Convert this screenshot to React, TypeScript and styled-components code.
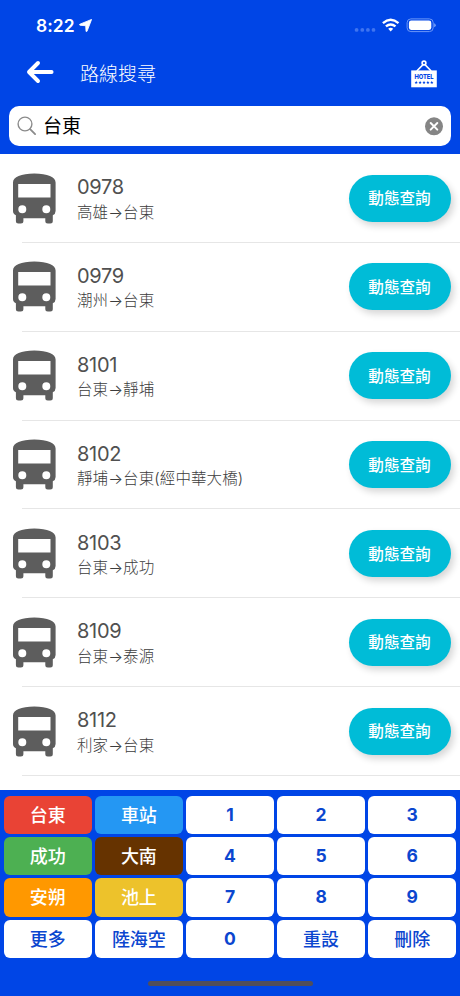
import React from "react";
import styled, { createGlobalStyle } from "styled-components";

const GlobalStyle = createGlobalStyle`
  * { box-sizing: border-box; }
  body { margin: 0; background: #0045e6; }
  button { border: 0; padding: 0; background: none; font: inherit; color: inherit; }
`;

const Screen = styled.div`
  width: 460px;
  height: 996px;
  display: flex;
  flex-direction: column;
  overflow: hidden;
  background: #fff;
  font-family: Inter, "Noto Sans CJK TC", sans-serif;
`;

const Header = styled.header`
  flex: none;
  height: 154px;
  background: #0045e6;
  color: #fff;
`;

const StatusBar = styled.div`
  height: 50px;
  padding: 0 24px 0 36px;
  display: flex;
  align-items: center;
  justify-content: space-between;
`;

const Clock = styled.div`
  display: flex;
  align-items: center;
  gap: 4.5px;
  padding-top: 1px;
  font-size: 17.4px;
  line-height: 20px;
  font-weight: 600;
  letter-spacing: 0.05px;
`;

const StatusIcons = styled.div`
  display: flex;
  align-items: center;
`;

const NavBar = styled.div`
  height: 56px;
  padding: 0 23px 8px 26px;
  display: flex;
  align-items: center;
`;

const Title = styled.h1`
  margin: 0 auto 0 26px;
  padding-top: 2px;
  font-size: 19px;
  line-height: 28px;
  font-weight: 300;
`;

const IconButton = styled.button`
  display: flex;
`;

const BackButton = styled(IconButton)`
  padding-bottom: 4px;
`;

const SearchBox = styled.div`
  margin: 0 9px;
  height: 40px;
  border-radius: 10px;
  padding: 0 7px 0 8px;
  display: flex;
  align-items: center;
  background: #fff;
`;

const SearchText = styled.span`
  flex: 1;
  margin-left: 6px;
  padding-top: 1px;
  color: #000;
  font-size: 19px;
  line-height: 28px;
`;

const RouteList = styled.main`
  flex: 1;
  min-height: 0;
  overflow: hidden;
`;

const RouteRow = styled.div`
  height: 88.85px;
  padding: 0 9px 0.6px 13px;
  display: flex;
  align-items: center;
  background: linear-gradient(#e6e6e6, #e6e6e6) 22px 100% / 438px 1px no-repeat;
`;

const RouteInfo = styled.div`
  flex: 1;
  margin-left: 21px;
  padding-top: 3.5px;
  color: #505050;
`;

const RouteNumber = styled.div`
  font-size: 20px;
  line-height: 25.5px;
  letter-spacing: -0.3px;
`;

const RouteName = styled.div`
  font-weight: 300;
  color: #3c3c3c;
  font-size: 15.5px;
  line-height: 24px;
  letter-spacing: 0.1px;
`;

const QueryButton = styled.button`
  width: 102px;
  height: 47px;
  padding-right: 1px;
  padding-top: 2px;
  border-radius: 24px;
  background: #00bcd7;
  color: #fff;
  font-size: 15.6px;
  font-weight: 500;
  line-height: 24px;
  box-shadow: 3px 4px 7px rgba(0, 0, 0, 0.16);
`;

const Keypad = styled.footer`
  flex: none;
  height: 206px;
  padding: 5.5px 3.8px 0;
  display: flex;
  flex-direction: column;
  background: #0045e6;
`;

const KeyGrid = styled.div`
  display: grid;
  grid-template-columns: repeat(5, 1fr);
  grid-auto-rows: 38.4px;
  gap: 3px 3.2px;
`;

const Key = styled.button<{ $fill?: string; $digit?: boolean }>`
  border-radius: 6px;
  padding-top: ${(p) => (p.$digit ? "0" : "2px")};
  background: ${(p) => p.$fill ?? "#fff"};
  color: ${(p) => (p.$fill ? "#fff" : "#0b46cf")};
  font-size: ${(p) => (p.$digit ? "17.5px" : "18px")};
  font-weight: ${(p) => (p.$digit ? 700 : 500)};
  line-height: 26px;
`;

const HomeIndicator = styled.div`
  width: 165px;
  height: 5px;
  margin: 23px auto 0;
  border-radius: 3px;
  background: #504e5b;
`;

const LocationIcon = () => (
  <svg width="13" height="13" viewBox="0 0 12 12">
    <path d="M11.6.4 7.4 11.4Q7 12.2 6.5 11.3L6.2 6.2 1 5.8Q-.1 5.2.8 4.8Z" fill="#fff" stroke="#fff" strokeWidth=".8" strokeLinejoin="round" />
  </svg>
);

const StatusGlyphs = () => (
  <svg width="82" height="16" viewBox="0 0 82 16">
    <g fill="#3f74f0">
      <circle cx="2.6" cy="12.9" r="1.9" />
      <circle cx="8.3" cy="12.9" r="1.9" />
      <circle cx="13.9" cy="12.9" r="1.9" />
      <circle cx="19.5" cy="12.9" r="1.9" />
    </g>
    <g fill="none" stroke="#fff" strokeWidth="2.4">
      <path d="M28.9 6.1Q36.7-.5 44.5 6.1" />
      <path d="M31.9 9.4Q36.7 5.4 41.5 9.4" />
    </g>
    <path d="M34.2 11.7Q36.7 9.9 39.2 11.7L36.7 14.5Z" fill="#fff" />
    <rect x="53.1" y="1.9" width="26.1" height="12.7" rx="3.8" fill="none" stroke="#6c97f7" strokeWidth="1" />
    <rect x="54.9" y="3.6" width="22.4" height="9.3" rx="2.3" fill="#fff" />
    <path d="M80.2 6.2v4q1.5-.5 1.5-2t-1.5-2Z" fill="#7ea5f8" />
  </svg>
);

const BackIcon = () => (
  <svg width="28" height="24" viewBox="0 0 28 24" fill="none" stroke="#fff" strokeWidth="3.9" strokeLinecap="round" strokeLinejoin="round">
    <path d="M25.6 12H4M12 3 3 12l9 9" />
  </svg>
);

const starXs = [5.2, 9.1, 13, 16.9, 20.8];

const HotelIcon = () => (
  <svg width="26" height="28" viewBox="0 0 26 28">
    <path d="M5.8 11 13 3.6 20.2 11" fill="none" stroke="#fff" strokeWidth="1.6" />
    <circle cx="13" cy="3" r="1.9" fill="#0045e6" stroke="#fff" strokeWidth="1.6" />
    <path d="M.2 10.4h25.6v16.9H.2Z" fill="#fff" />
    <text x="3.4" y="18.7" textLength="19.2" lengthAdjust="spacingAndGlyphs" fontSize="6.4" fontWeight="800" fontFamily="Inter, sans-serif" fill="#0045e6">HOTEL</text>
    {starXs.map((x) => (
      <path key={x} transform={`translate(${x} 22.4)`} d="M0-1.6.5-.5 1.6-.4.8.4 1 1.5 0 .9-1 1.5-.8.4-1.6-.4-.5-.5Z" fill="#0045e6" />
    ))}
  </svg>
);

const SearchIcon = () => (
  <svg width="20" height="20" viewBox="0 0 20 20" fill="none" stroke="#8b8b8b" strokeLinecap="round">
    <circle cx="8" cy="8" r="6.9" strokeWidth="1.4" />
    <path d="m13.1 13.1 5 5" strokeWidth="1.8" />
  </svg>
);

const ClearIcon = () => (
  <svg width="19" height="19" viewBox="0 0 19 19">
    <circle cx="9" cy="9.3" r="9" fill="#858585" />
    <path d="m5.7 6 6.6 6.6m0-6.6-6.6 6.6" stroke="#fff" strokeWidth="2" strokeLinecap="round" />
  </svg>
);

const BusIcon = () => (
  <svg width="43" height="51" viewBox="0 0 43 51">
    <path
      fill="#5d5d5d"
      fillRule="evenodd"
      d="M0 9.5C0 4 8 .5 21.3.5S42.6 4 42.6 9.5V38Q42.6 41 39.8 42.2V48Q39.8 50.5 37.3 50.5H34.8Q32.3 50.5 32.3 48V45.3H10.4V48Q10.4 50.5 7.9 50.5H5.4Q2.9 50.5 2.9 48V42.2Q0 41 0 38ZM5.2 11V24.6H37.5V11ZM5.3 36.2a4 4 0 1 0 8 0a4 4 0 1 0-8 0ZM29.3 36.2a4 4 0 1 0 8 0a4 4 0 1 0-8 0Z"
    />
  </svg>
);

const routes = [
  { number: "0978", name: "高雄→台東" },
  { number: "0979", name: "潮州→台東" },
  { number: "8101", name: "台東→靜埔" },
  { number: "8102", name: "靜埔→台東(經中華大橋)" },
  { number: "8103", name: "台東→成功" },
  { number: "8109", name: "台東→泰源" },
  { number: "8112", name: "利家→台東" },
];

const keys: { label: string; fill?: string }[] = [
  { label: "台東", fill: "#e94335" },
  { label: "車站", fill: "#2497f3" },
  { label: "1" },
  { label: "2" },
  { label: "3" },
  { label: "成功", fill: "#4db052" },
  { label: "大南", fill: "#663300" },
  { label: "4" },
  { label: "5" },
  { label: "6" },
  { label: "安朔", fill: "#ff9800" },
  { label: "池上", fill: "#edc22b" },
  { label: "7" },
  { label: "8" },
  { label: "9" },
  { label: "更多" },
  { label: "陸海空" },
  { label: "0" },
  { label: "重設" },
  { label: "刪除" },
];

export default function App() {
  return (
    <>
      <GlobalStyle />
      <Screen lang="zh-Hant">
        <Header>
          <StatusBar>
            <Clock>
              8:22
              <LocationIcon />
            </Clock>
            <StatusIcons>
              <StatusGlyphs />
            </StatusIcons>
          </StatusBar>
          <NavBar>
            <BackButton aria-label="返回">
              <BackIcon />
            </BackButton>
            <Title>路線搜尋</Title>
            <IconButton aria-label="飯店">
              <HotelIcon />
            </IconButton>
          </NavBar>
          <SearchBox>
            <SearchIcon />
            <SearchText>台東</SearchText>
            <IconButton aria-label="清除">
              <ClearIcon />
            </IconButton>
          </SearchBox>
        </Header>
        <RouteList>
          {routes.map((route) => (
            <RouteRow key={route.number}>
              <BusIcon />
              <RouteInfo>
                <RouteNumber>{route.number}</RouteNumber>
                <RouteName>{route.name}</RouteName>
              </RouteInfo>
              <QueryButton>動態查詢</QueryButton>
            </RouteRow>
          ))}
        </RouteList>
        <Keypad>
          <KeyGrid>
            {keys.map((key) => (
              <Key key={key.label} $fill={key.fill} $digit={/^\d$/.test(key.label)}>
                {key.label}
              </Key>
            ))}
          </KeyGrid>
          <HomeIndicator />
        </Keypad>
      </Screen>
    </>
  );
}
